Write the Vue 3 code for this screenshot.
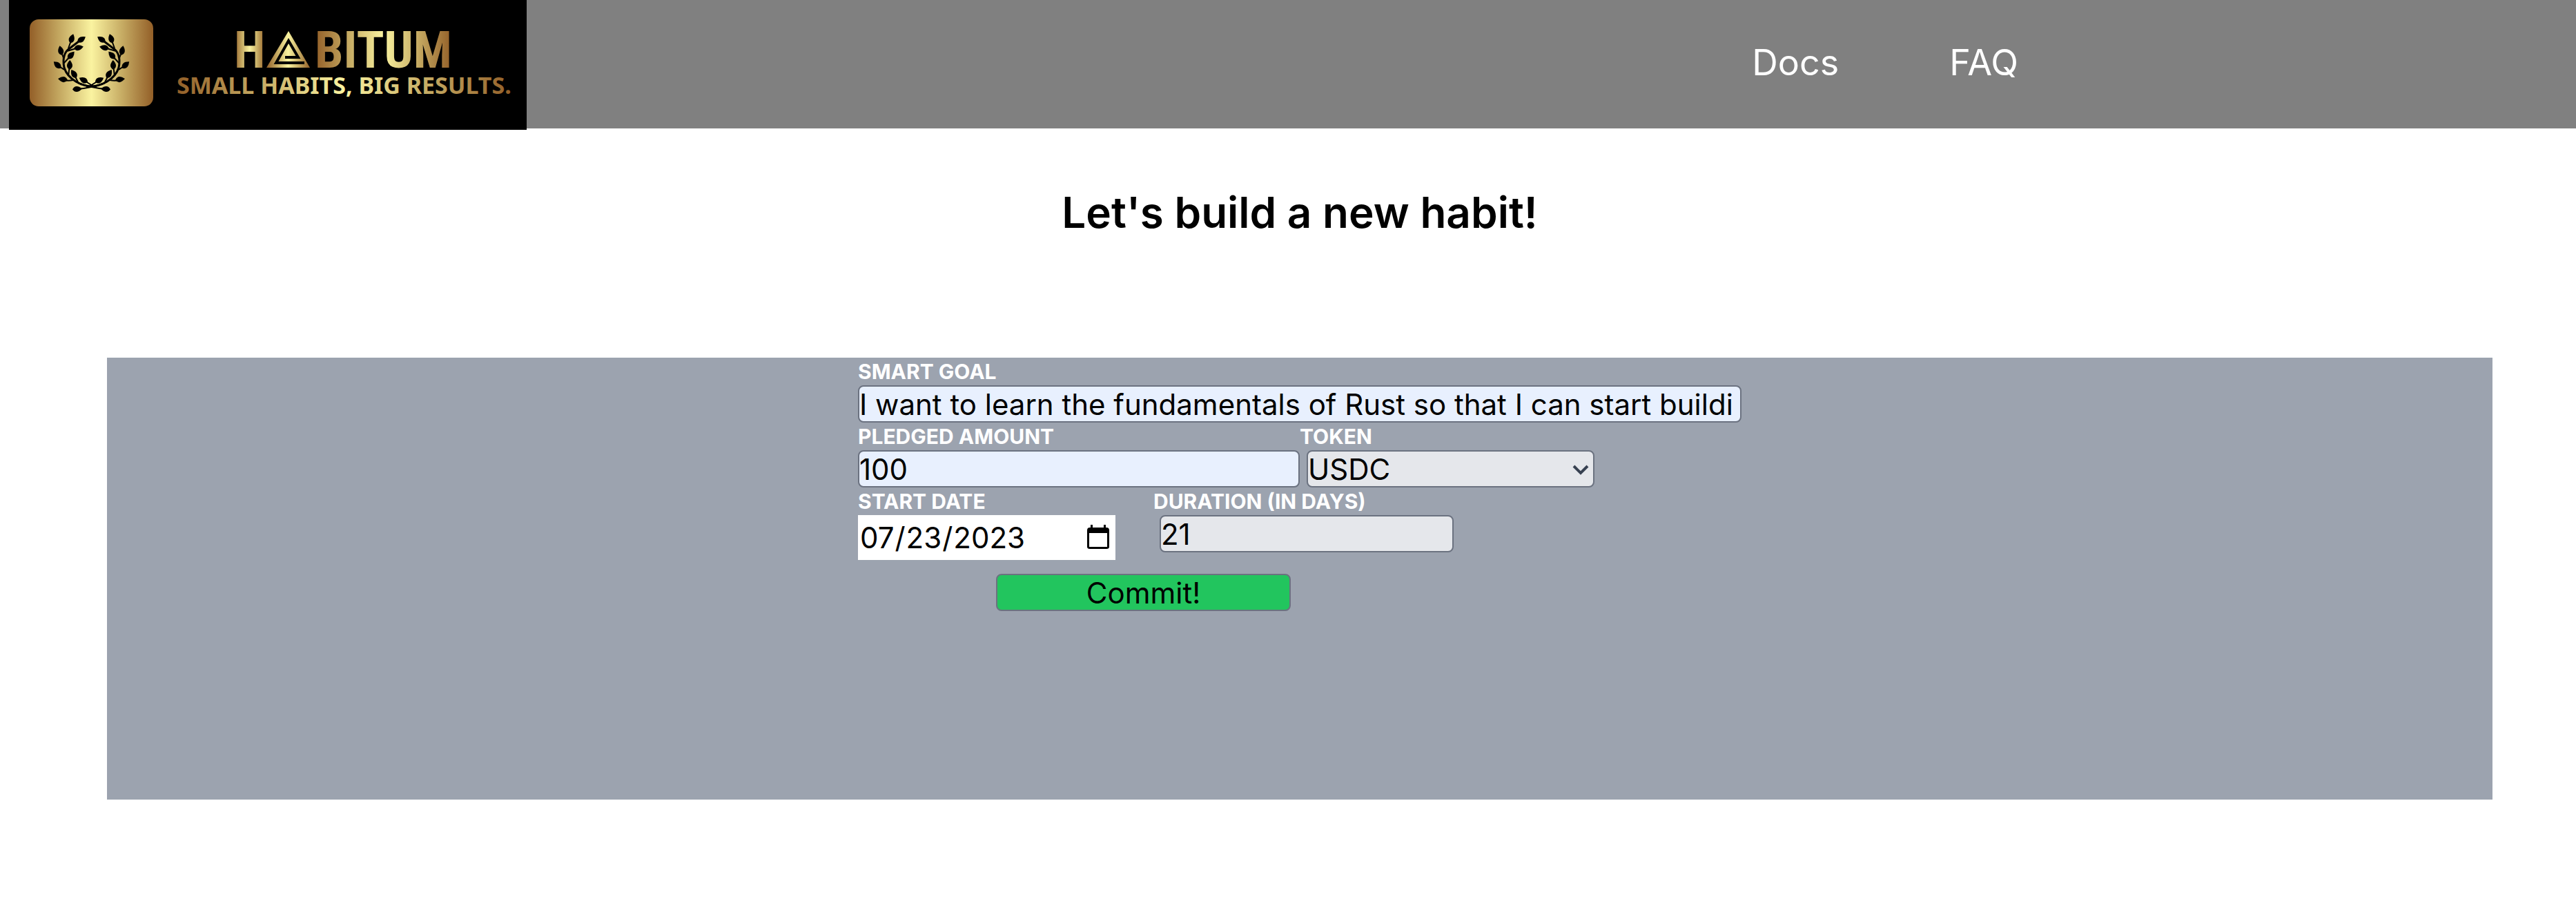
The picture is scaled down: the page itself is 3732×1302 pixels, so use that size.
<script setup>
import { ref } from 'vue'

const goal = ref('I want to learn the fundamentals of Rust so that I can start buildi')
const amount = ref('100')
const token = ref('USDC')
const startDate = ref('2023-07-23')
const duration = ref('21')

// x, y and counter-clockwise angle of each leaf on the left branch
const leaves = [
  [104, 56, 72], [118, 57, 33], [114, 69, 12], [88, 73, 102], [103, 80, 48],
  [83, 94, 138], [101, 94, 88], [107, 107, 122], [91, 115, 172], [121, 116, 152], [112, 129, 4],
]
</script>

<template>
  <div class="page">
    <header class="topbar">
      <a class="brand" href="#" aria-label="Habitum home">
        <svg class="logo" viewBox="13 0 750 188" width="750" height="188">
          <defs>
            <linearGradient id="gold">
              <stop offset="0" stop-color="#935f28" />
              <stop offset="0.25" stop-color="#c6ab63" />
              <stop offset="0.5" stop-color="#faf3a0" />
              <stop offset="0.75" stop-color="#c6ab63" />
              <stop offset="1" stop-color="#935f28" />
            </linearGradient>
            <g id="branch">
              <path d="M140 125 C118 127 98 114 93 98 C90 84 94 74 101 70 L118 57" fill="none" stroke="#000" stroke-width="3" />
              <path d="M99 70 L104 56 M97 74 L114 69 M92 84 L88 73 M92 92 L103 80 M93 101 L83 94 M99 110 L101 94 M106 116 Q97 118 91 115 M114 121 L107 107 M137 126 L121 116 M152 120 Q130 128 112 129" fill="none" stroke="#000" stroke-width="2" />
              <path v-for="(leaf, i) in leaves" :key="i" d="M-7 0 Q-2 -8 7 0 Q-2 8 -7 0Z" :transform="`translate(${leaf[0]} ${leaf[1]}) rotate(${-leaf[2]})`" />
            </g>
          </defs>
          <rect x="13" width="750" height="188" />
          <rect x="43" y="28" width="179" height="126" rx="13" fill="url(#gold)" />
          <use href="#branch" />
          <use href="#branch" transform="matrix(-1 0 0 1 265 0)" />
          <text class="word" x="339" y="98" fill="url(#gold)">H</text>
          <path d="M418 45 L449 98 H386Z" fill="url(#gold)" />
          <path d="M441 91 H400 L418 59 L432 83 H413" fill="none" stroke="#000" stroke-width="4" />
          <text class="word" x="456" y="98" fill="url(#gold)">BITUM</text>
          <text class="tagline" x="256" y="136" fill="url(#gold)">SMALL HABITS, BIG RESULTS.</text>
        </svg>
      </a>
      <nav class="links">
        <a href="#docs">Docs</a>
        <a href="#faq">FAQ</a>
      </nav>
    </header>

    <main class="content">
      <h1>Let's build a new habit!</h1>
      <section class="panel">
        <form class="form" @submit.prevent>
          <div class="field wide">
            <label for="goal">SMART GOAL</label>
            <input id="goal" v-model="goal" class="filled" type="text" />
          </div>
          <div class="row">
            <div class="field half">
              <label for="amount">PLEDGED AMOUNT</label>
              <input id="amount" v-model="amount" class="filled" type="text" />
            </div>
            <div class="field token">
              <label for="token">TOKEN</label>
              <div class="select">
                <select id="token" v-model="token">
                  <option>USDC</option>
                  <option>DAI</option>
                </select>
                <svg viewBox="0 0 24 16" width="24" height="16" aria-hidden="true">
                  <path d="M2 3 L12 13 L22 3" fill="none" stroke="#374151" stroke-width="4" />
                </svg>
              </div>
            </div>
          </div>
          <div class="row dates">
            <div class="field date">
              <label for="start">START DATE</label>
              <div class="datebox">
                <input id="start" v-model="startDate" type="date" />
                <svg viewBox="0 0 32 36" width="32" height="36" aria-hidden="true">
                  <path d="M5 0h3v4h16V0h3v4h1q4 0 4 4v24q0 3-4 3H4q-4 0-4-3V8q0-4 4-4h1z M3 12v20h26V12z" fill-rule="evenodd" />
                </svg>
              </div>
            </div>
            <div class="field duration">
              <label for="duration">DURATION (IN DAYS)</label>
              <input id="duration" v-model="duration" type="text" />
            </div>
          </div>
          <button type="submit">Commit!</button>
        </form>
      </section>
    </main>
  </div>
</template>

<style>
body {
  margin: 0;
  background: #fff;
}
</style>

<style scoped>
.page {
  font-family: Inter, "Noto Sans", sans-serif;
  color: #000;
}
.topbar {
  display: flex;
  align-items: flex-start;
  height: 186px;
  padding-left: 13px;
  background: #808080;
}
.brand,
.logo {
  display: block;
}
.word {
  font: bold 74px "Roboto Condensed", Roboto, sans-serif;
}
.tagline {
  font: 700 34px "Noto Sans", "Open Sans", sans-serif;
}
.links {
  display: flex;
  gap: 160px;
  margin-left: auto;
  margin-right: 808px;
  padding-top: 61px;
}
.links a {
  color: #fff;
  font-size: 52px;
  line-height: 60px;
  text-decoration: none;
}
.content {
  padding: 72px 121px 144px 155px;
}
h1 {
  margin: 0 0 160px;
  font-size: 62px;
  line-height: 100px;
  font-weight: 600;
  text-align: center;
}
.panel {
  min-height: 640px;
  background: #9ca3af;
}
.form {
  width: 1280px;
  margin-left: 1088px;
}
.row {
  display: flex;
}
label {
  display: block;
  color: #fff;
  font-size: 30px;
  line-height: 40px;
  font-weight: 700;
  white-space: nowrap;
}
input,
select,
button {
  display: block;
  box-sizing: border-box;
  width: 100%;
  height: 54px;
  margin: 0;
  padding: 0;
  border: 2px solid #6b7280;
  border-radius: 8px;
  background: #e5e7eb;
  color: #000;
  font: inherit;
  font-size: 42px;
}
input.filled {
  background: #e8f0fe;
}
.half {
  width: 640px;
}
.token {
  width: 427px;
}
.select {
  position: relative;
  margin-left: 10px;
}
select {
  appearance: none;
}
.select svg {
  position: absolute;
  right: 8px;
  top: 20px;
}
.dates {
  gap: 55px;
}
.date {
  width: 373px;
}
.datebox {
  position: relative;
}
.datebox input {
  height: 65px;
  padding-left: 2px;
  border: 0;
  border-radius: 0;
  background: #fff;
}
.datebox input::-webkit-calendar-picker-indicator {
  opacity: 0;
}
.datebox svg {
  position: absolute;
  right: 9px;
  top: 14px;
  pointer-events: none;
}
.duration {
  width: 435px;
}
.duration input {
  width: 426px;
  margin-left: 9px;
}
button {
  width: 427px;
  margin: 20px 0 0 200px;
  background: #22c55e;
}
</style>
